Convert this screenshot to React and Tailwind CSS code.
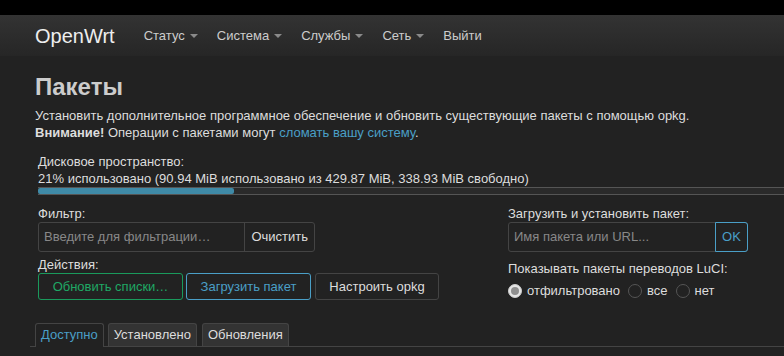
import React from 'react'

const navItems = [
  { label: 'Статус', caret: true },
  { label: 'Система', caret: true },
  { label: 'Службы', caret: true },
  { label: 'Сеть', caret: true },
  { label: 'Выйти', caret: false },
]

const Caret = () => (
  <span className="ml-[5px] inline-block h-0 w-0 border-x-[4px] border-t-[4px] border-x-transparent border-t-[#8a8a8a] align-middle" />
)

const Radio = ({ checked, label }) => (
  <label className="flex items-center gap-[5px]">
    <span
      className={`flex h-[14px] w-[14px] items-center justify-center rounded-full border ${
        checked ? 'border-[#ccc] bg-[#e6e6e6]' : 'border-[#555] bg-[#222]'
      }`}
    >
      {checked ? <span className="h-[8px] w-[8px] rounded-full bg-[#8f8f8f]" /> : null}
    </span>
    <span className="text-[#ddd]">{label}</span>
  </label>
)

export default function App() {
  return (
    <div
      className="h-[356px] w-[784px] overflow-hidden bg-[#222] text-[13px] text-[#ddd]"
      style={{ fontFamily: '"Liberation Sans", Arial, sans-serif' }}
    >
      <div className="h-[15px] bg-black" />
      <header className="flex h-[41px] items-center bg-gradient-to-b from-[#333] to-[#262626] pl-[35px]">
        <span className="mr-[29px] text-[20px] text-[#eee]">OpenWrt</span>
        <nav className="flex items-center gap-[19px]">
          {navItems.map((item) => (
            <span key={item.label} className="flex items-center text-[13px] text-[#ccc]">
              {item.label}
              {item.caret ? <Caret /> : null}
            </span>
          ))}
        </nav>
      </header>

      <main className="pl-[35px]">
        <h2 className="mt-[16px] text-[24px] font-bold leading-[30px] text-[#ccc]">Пакеты</h2>
        <div className="mt-[5px] leading-[17px] text-[#ddd]">
          <p>Установить дополнительное программное обеспечение и обновить существующие пакеты с помощью opkg.</p>
          <p>
            <strong>Внимание!</strong> Операции с пакетами могут{' '}
            <a className="text-[#4a9fc7]">сломать вашу систему</a>.
          </p>
        </div>

        <div className="mt-[12px] pl-[3px] leading-[17px]">
          <div>Дисковое пространство:</div>
          <div>21% использовано (90.94 MiB использовано из 429.87 MiB, 338.93 MiB свободно)</div>
        </div>
        <div className="ml-[3px] h-[8px] border-y border-[#555] bg-[#2a2a2a]">
          <div className="h-full w-[196px] rounded-[2px] bg-[#3f8aa7]" />
        </div>

        <div className="mt-[11px] flex pl-[3px]">
          <div className="w-[470px]">
            <div className="leading-[16px]">Фильтр:</div>
            <div className="flex h-[30px] w-[277px] rounded-[3px] border border-[#444]">
              <span className="flex flex-1 items-center px-[5px] text-[#888]">Введите для фильтрации…</span>
              <span className="flex items-center border-l border-[#444] px-[6px] text-[#ddd]">Очистить</span>
            </div>
            <div className="mt-[5px] leading-[16px]">Действия:</div>
            <div className="flex gap-[3px]">
              <span className="flex h-[27px] w-[145px] items-center justify-center rounded-[3px] border border-[#1a9a5c] text-[#1fa865]">
                Обновить списки…
              </span>
              <span className="flex h-[27px] w-[125px] items-center justify-center rounded-[3px] border border-[#4a9fc7] text-[#4a9fc7]">
                Загрузить пакет
              </span>
              <span className="ml-[1px] flex h-[27px] w-[124px] items-center justify-center rounded-[3px] border border-[#444] text-[#ddd]">
                Настроить opkg
              </span>
            </div>
          </div>
          <div>
            <div className="leading-[16px]">Загрузить и установить пакет:</div>
            <div className="flex h-[30px] w-[240px] rounded-[3px] border border-[#444]">
              <span className="flex flex-1 items-center px-[5px] text-[#888]">Имя пакета или URL...</span>
              <span className="-my-px -mr-px flex w-[33px] items-center justify-center rounded-r-[3px] border border-[#4a9fc7] text-[#4a9fc7]">
                OK
              </span>
            </div>
            <div className="mt-[9px] leading-[16px]">Показывать пакеты переводов LuCI:</div>
            <div className="mt-[4px] flex items-center gap-[8px]">
              <Radio checked label="отфильтровано" />
              <Radio label="все" />
              <Radio label="нет" />
            </div>
          </div>
        </div>

        <div className="-ml-[5px] mt-[22px] flex items-end gap-[4px] border-b border-[#444] pl-[5px]">
          <span className="-mb-px h-[24px] rounded-t-[3px] border border-b-0 border-[#444] bg-[#222] px-[5px] leading-[22px] text-[#4a9fc7]">
            Доступно
          </span>
          <span className="mr-[1px] h-[23px] rounded-t-[3px] border border-b-0 border-[#444] bg-[#333] px-[5px] leading-[22px] text-[#ddd]">
            Установлено
          </span>
          <span className="h-[23px] rounded-t-[3px] border border-b-0 border-[#444] bg-[#333] px-[5px] leading-[22px] text-[#ddd]">
            Обновления
          </span>
        </div>
      </main>
    </div>
  )
}
